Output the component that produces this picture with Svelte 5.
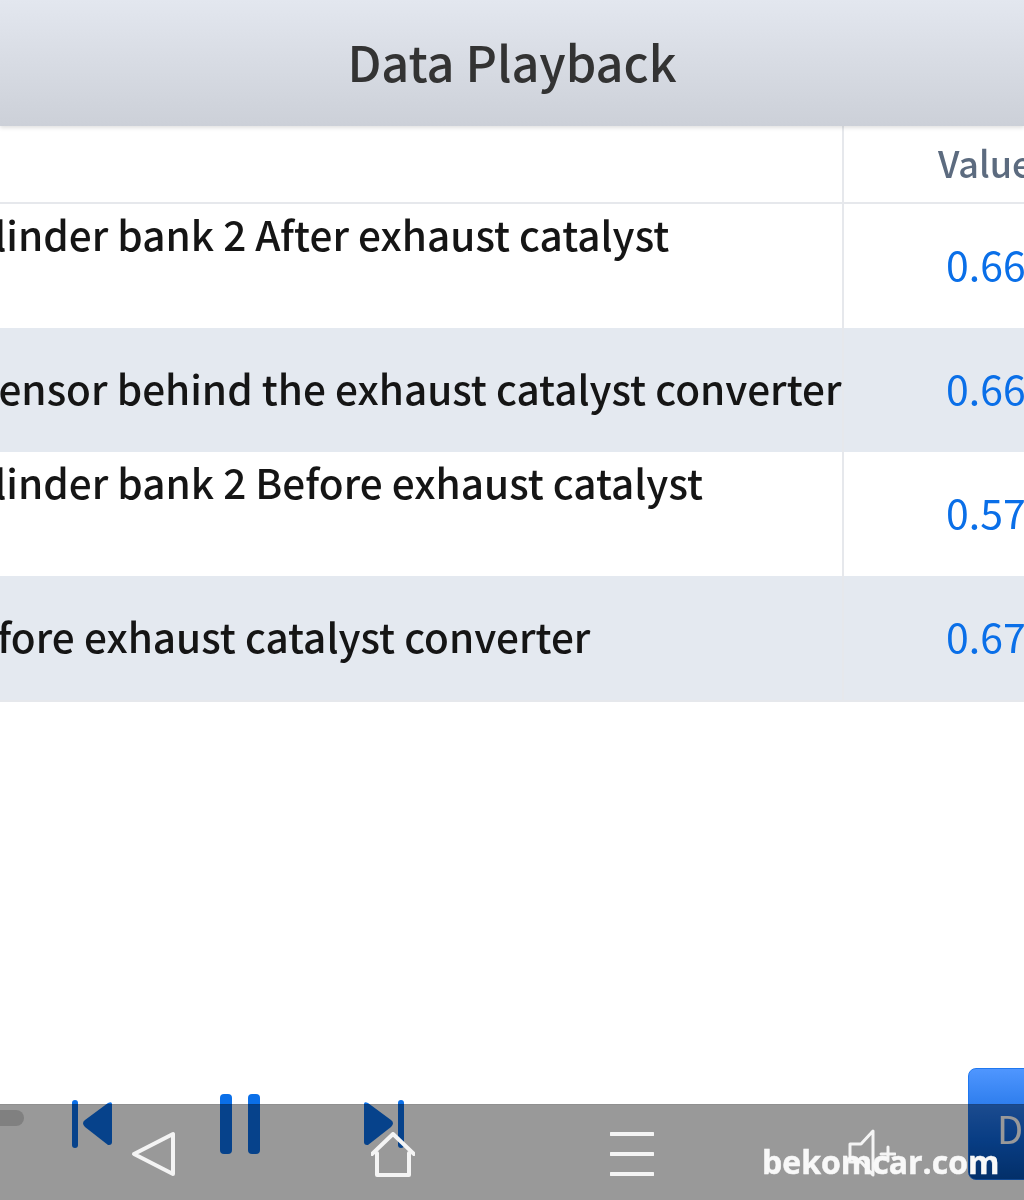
<script>
  const rows = [
    { text: 'cylinder bank 2 After exhaust catalyst', offset: -49, value: '0.66', tall: true },
    { text: 'sensor behind the exhaust catalyst converter', offset: -21, value: '0.66', tall: false },
    { text: 'cylinder bank 2 Before exhaust catalyst', offset: -49, value: '0.57', tall: true },
    { text: 'before exhaust catalyst converter', offset: -51, value: '0.67', tall: false }
  ];
</script>

<div class="page">
  <header class="title"><h1>Data Playback</h1></header>

  <section class="table">
    <div class="row head">
      <div class="name"></div>
      <div class="val">Value</div>
    </div>
    {#each rows as r, i}
      <div class="row" class:tint={i % 2 === 1}>
        <div class="name" class:top={r.tall}>
          <span style="margin-left: {r.offset}px">{r.text}</span>
        </div>
        <div class="val num">{r.value}</div>
      </div>
    {/each}
  </section>

  <footer class="controls">
    <div class="slider"></div>
    <svg class="ctl prev" width="42" height="50" viewBox="0 0 42 50" aria-hidden="true">
      <rect x="0" y="0" width="6" height="48" rx="3" />
      <path d="M40 4v38q0 3-3 3h-1L13 27q-4-4 0-7L36 3q4-2 4 1z" />
    </svg>
    <svg class="ctl pause" width="42" height="60" viewBox="0 0 42 60" aria-hidden="true">
      <rect x="0" y="0" width="12" height="60" rx="4" />
      <rect x="28" y="0" width="12" height="60" rx="4" />
    </svg>
    <svg class="ctl next" width="42" height="50" viewBox="0 0 42 50" aria-hidden="true">
      <rect x="34" y="0" width="6" height="48" rx="3" />
      <path d="M0 4v38q0 3 3 3h1l23-18q4-4 0-7L4 3Q0 1 0 4z" />
    </svg>
    <div class="dbtn">D</div>
  </footer>

  <nav class="sysbar">
    <svg class="nav back" width="46" height="46" viewBox="0 0 46 46" aria-hidden="true">
      <path d="M42 3v40L3 23z" />
    </svg>
    <svg class="nav home" width="44" height="46" viewBox="0 0 44 46" aria-hidden="true">
      <path d="M1 22 22 2l21 20M6 21v22h32V21" />
    </svg>
    <svg class="nav menu" width="44" height="46" viewBox="0 0 44 46" aria-hidden="true">
      <path d="M1 3h42M1 23h42M1 43h42" />
    </svg>
    <svg class="nav vol" width="48" height="50" viewBox="0 0 48 50" aria-hidden="true">
      <path d="M2 16h11L25 3v44L13 34H2zM33 26h14M40 19v14" />
    </svg>
    <span class="mark">bekomcar.com</span>
  </nav>
</div>

<style>
  :global(body) { margin: 0; background: #fff; }
  .page {
    position: relative;
    width: 1024px;
    height: 1200px;
    overflow: hidden;
    display: flex;
    flex-direction: column;
    background: #fff;
    font-family: "Noto Sans CJK KR", "Noto Sans", sans-serif;
    filter: blur(0.5px);
  }
  .title {
    position: relative;
    z-index: 1;
    height: 126px;
    flex: none;
    display: flex;
    align-items: center;
    justify-content: center;
    padding-bottom: 4px;
    box-sizing: border-box;
    background: linear-gradient(#e3e7ef, #ccd0d8);
    box-shadow: 0 2px 4px rgba(0, 0, 0, 0.12);
  }
  h1 {
    margin: 0;
    font-size: 48.6px;
    font-weight: 500;
    color: #333;
    line-height: 1;
  }
  .table { flex: none; border-bottom: 2px solid #e6e8ec; }
  .row { display: flex; height: 124px; }
  .row.head { height: 76px; border-bottom: 2px solid #e6e8ec; }
  .row.tint { background: #e4e9f0; }
  .name {
    width: 844px;
    box-sizing: border-box;
    flex: none;
    overflow: hidden;
    white-space: nowrap;
    display: flex;
    align-items: center;
    padding-bottom: 6px;
    font-size: 40.5px;
    font-weight: 500;
    color: #151515;
    border-right: 2px solid #e6e8ec;
  }
  .name.top { align-items: flex-start; padding: 2px 0 0; line-height: 56px; }
  .val {
    flex: 1;
    display: flex;
    align-items: center;
    padding-left: 94px;
    padding-bottom: 4px;
    font-size: 36px;
    font-weight: 500;
    color: #5c6b7f;
    white-space: nowrap;
    overflow: hidden;
  }
  .val.num { padding-left: 102px; padding-bottom: 6px; font-size: 41px; font-weight: 400; color: #0a6fe8; }

  .controls {
    position: absolute;
    left: 0;
    right: 0;
    top: 1068px;
    height: 132px;
    display: flex;
    align-items: flex-start;
  }
  .slider {
    width: 24px;
    height: 16px;
    margin-top: 42px;
    border-radius: 0 8px 8px 0;
    background: #d5d5d5;
    flex: none;
  }
  .ctl { fill: #0a6fe8; flex: none; }
  .prev { margin: 32px 0 0 48px; }
  .pause { margin: 26px 0 0 106px; }
  .next { margin: 32px 0 0 102px; }
  .dbtn {
    position: absolute;
    left: 968px;
    top: 0;
    width: 100px;
    height: 112px;
    box-sizing: border-box;
    padding: 34px 0 0 28px;
    border-radius: 8px;
    border: 1px solid #1f78f0;
    background: linear-gradient(#4f96ff, #0e66dc 65%, #0650b0);
    color: #fff;
    font-size: 38px;
    line-height: 1.3;
  }

  .sysbar {
    position: absolute;
    left: 0;
    right: 0;
    top: 1104px;
    height: 96px;
    background: rgba(0, 0, 0, 0.4);
    box-shadow: inset 0 1px 0 rgba(0, 0, 0, 0.06);
  }
  .nav {
    position: absolute;
    fill: none;
    stroke: #f4f4f4;
    stroke-width: 4;
    stroke-linejoin: round;
    stroke-linecap: round;
  }
  .back { left: 131px; top: 27px; }
  .home { left: 371px; top: 28px; }
  .menu { left: 610px; top: 27px; }
  .vol { left: 848px; top: 24px; stroke-width: 3; }
  .mark {
    position: absolute;
    left: 762px;
    top: 36px;
    font-family: "Open Sans", sans-serif;
    font-weight: 700;
    font-size: 32px;
    line-height: 44px;
    color: #f8f8f8;
    -webkit-text-stroke: 0.5px #f8f8f8;
    white-space: nowrap;
  }
</style>
